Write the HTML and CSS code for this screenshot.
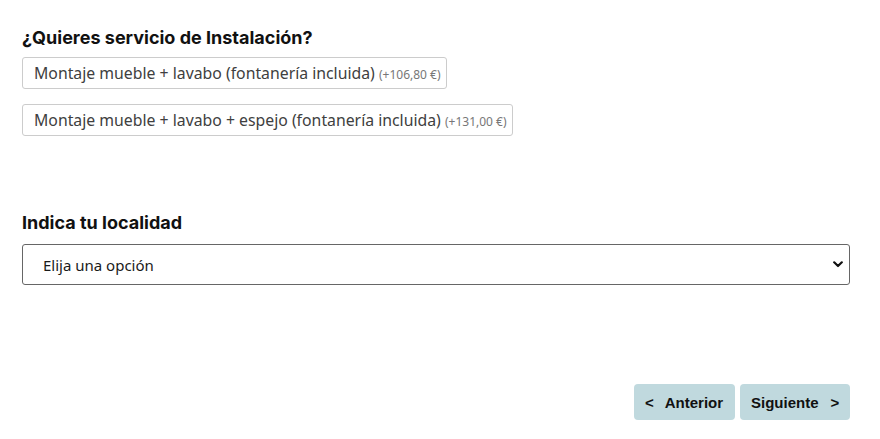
FILE: index.html
```html
<!DOCTYPE html>
<html lang="es">
<head>
<meta charset="utf-8">
<title>Instalación</title>
<link rel="stylesheet" href="styles.css">
</head>
<body>
<div class="form">
  <section class="field field-install">
    <h2 class="field-title">¿Quieres servicio de Instalación?</h2>
    <div class="options">
      <label class="option">Montaje mueble + lavabo (fontanería incluida) <span class="price">(+106,80 €)</span></label>
      <label class="option">Montaje mueble + lavabo + espejo (fontanería incluida) <span class="price">(+131,00 €)</span></label>
    </div>
  </section>
  <section class="field field-city">
    <h2 class="field-title">Indica tu localidad</h2>
    <div class="select-wrap">
      <select class="select">
        <option>Elija una opción</option>
      </select>
      <svg class="chevron" width="10" height="7" viewBox="0 0 10 7"><path d="M1.2 1.3 L5 5 L8.8 1.3" fill="none" stroke="#111" stroke-width="2.2" stroke-linecap="round" stroke-linejoin="round"/></svg>
    </div>
  </section>
  <div class="nav">
    <button class="btn btn-prev"><span class="arrow">&lt;</span>Anterior</button>
    <button class="btn btn-next">Siguiente<span class="arrow arrow-r">&gt;</span></button>
  </div>
</div>
</body>
</html>
```
FILE: styles.css
```css
html, body {
  margin: 0;
  padding: 0;
  background: #fff;
}
.form {
  width: 828px;
  padding: 27px 0 0 22px;
  display: flex;
  flex-direction: column;
}
.field-title {
  font-family: Inter, "Liberation Sans", sans-serif;
  font-weight: 700;
  font-size: 18px;
  line-height: 22px;
  color: #111;
  margin: 0;
}
.options {
  display: flex;
  flex-direction: column;
  align-items: flex-start;
  gap: 15px;
  margin-top: 8px;
}
.option {
  display: inline-block;
  border: 1px solid #ccc;
  border-radius: 3px;
  height: 30px;
  line-height: 30px;
  padding: 0 5px 0 11px;
  font-family: "Noto Sans", "Open Sans", sans-serif;
  font-size: 15.8px;
  color: #404040;
  white-space: nowrap;
}
.price {
  font-size: 12px;
  color: #777;
}
.field-city {
  margin-top: 76px;
}
.select-wrap {
  position: relative;
  margin-top: 10px;
}
.select {
  appearance: none;
  -webkit-appearance: none;
  width: 828px;
  height: 41px;
  border: 1px solid #666;
  border-radius: 3px;
  background: #fff;
  padding: 0 20px;
  font-family: "Noto Sans", "Open Sans", sans-serif;
  font-size: 15px;
  color: #1a1a1a;
  display: block;
}
.chevron {
  position: absolute;
  right: 7px;
  top: 17px;
  pointer-events: none;
}
.nav {
  display: flex;
  justify-content: flex-end;
  gap: 5px;
  margin-top: 99px;
}
.btn {
  height: 36px;
  border: none;
  border-radius: 4px;
  background: #c0d9de;
  font-family: "Liberation Sans", Arial, sans-serif;
  font-weight: 700;
  font-size: 15px;
  color: #111;
  padding: 0 11px;
  display: flex;
  align-items: center;
}
.btn-prev { width: 101px; }
.btn-next { width: 110px; }
.arrow {
  margin-right: 11px;
}
.arrow-r {
  margin-right: 0;
  margin-left: 12px;
}
```
